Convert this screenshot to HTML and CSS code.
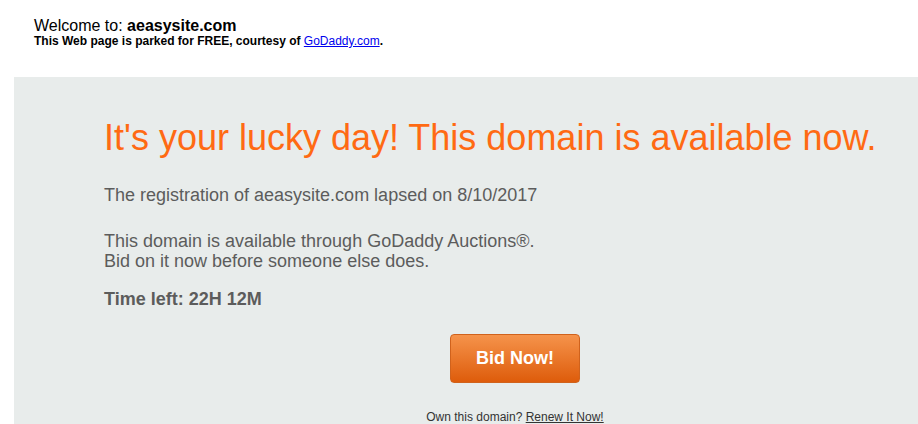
FILE: index.html
```html
<!DOCTYPE html>
<html>
<head>
<meta charset="utf-8">
<link rel="stylesheet" href="styles.css">
</head>
<body>
<div class="header">
  <div class="welcome">Welcome to: <b>aeasysite.com</b></div>
  <div class="parked">This Web page is parked for FREE, courtesy of <a href="#">GoDaddy.com</a>.</div>
</div>
<div class="panel">
  <div class="content">
    <h1 class="headline">It's your lucky day! This domain is available now.</h1>
    <p class="lapsed">The registration of aeasysite.com lapsed on 8/10/2017</p>
    <p class="avail">This domain is available through GoDaddy Auctions®.<br>Bid on it now before someone else does.</p>
    <p class="time">Time left: 22H 12M</p>
    <div class="actions">
      <a class="bid" href="#">Bid Now!</a>
      <div class="own">Own this domain? <a href="#">Renew It Now!</a></div>
    </div>
  </div>
</div>
</body>
</html>
```
FILE: styles.css
```css
html, body {
  margin: 0;
  padding: 0;
  background: #fff;
  font-family: "Liberation Sans", Arial, sans-serif;
}
.header {
  padding: 17px 0 0 34px;
  height: 60px;
  box-sizing: border-box;
  color: #000;
}
.welcome {
  font-size: 16px;
  line-height: 18px;
}
.parked {
  font-size: 12px;
  font-weight: bold;
  line-height: 13px;
}
.parked a {
  color: #00e;
  font-weight: normal;
  text-decoration: underline;
}
.panel {
  margin-left: 14px;
  margin-top: 17px;
  background: #e8eceb;
  height: 400px;
}
.content {
  padding: 43px 0 0 90px;
}
.headline {
  margin: 0;
  font-size: 36px;
  line-height: 36px;
  font-weight: normal;
  color: #ff6a13;
}
.lapsed {
  margin: 29px 0 0;
  font-size: 18px;
  line-height: 20px;
  color: #5c5c5c;
}
.avail {
  margin: 26px 0 0;
  font-size: 18px;
  line-height: 20px;
  color: #5c5c5c;
}
.time {
  margin: 18px 0 0;
  font-size: 18px;
  line-height: 20px;
  font-weight: bold;
  color: #5c5c5c;
}
.actions {
  display: flex;
  flex-direction: column;
  align-items: center;
  padding-left: 8px;
}
.bid {
  margin-top: 25px;
  width: 130px;
  height: 49px;
  box-sizing: border-box;
  display: flex;
  align-items: center;
  justify-content: center;
  border: 1px solid #d0621c;
  border-radius: 4px;
  background: linear-gradient(#f5934b, #de5c0b);
  color: #fff;
  font-weight: bold;
  font-size: 18px;
  text-decoration: none;
}
.own {
  margin-top: 27px;
  font-size: 12px;
  line-height: 14px;
  color: #333;
}
.own a {
  color: #333;
  text-decoration: underline;
}
```
